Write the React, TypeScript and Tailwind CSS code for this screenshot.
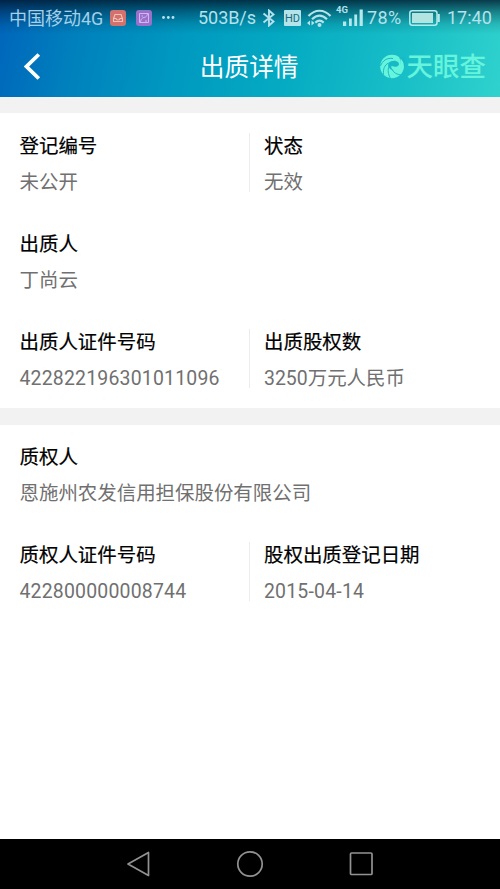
import clsx from "clsx";

interface Field {
  label: string;
  value: string;
}

const pledgor: Field[][] = [
  [
    { label: "登记编号", value: "未公开" },
    { label: "状态", value: "无效" },
  ],
  [{ label: "出质人", value: "丁尚云" }],
  [
    { label: "出质人证件号码", value: "422822196301011096" },
    { label: "出质股权数", value: "3250万元人民币" },
  ],
];

const pledgee: Field[][] = [
  [{ label: "质权人", value: "恩施州农发信用担保股份有限公司" }],
  [
    { label: "质权人证件号码", value: "422800000008744" },
    { label: "股权出质登记日期", value: "2015-04-14" },
  ],
];

const StatusBar = () => (
  <div className="flex h-9 items-center whitespace-nowrap pl-[9px] text-[18px] leading-9 text-[#b4e2ec]">
    <span className="w-[101px] pt-px text-[#a3cfe8]">中国移动4G</span>

    {/* Notification icons */}
    <svg className="h-4 w-4 shrink-0" viewBox="0 0 16 16" fill="none">
      <rect width="16" height="16" rx="3" fill="#d2716d" />
      <path d="M3.5 8.5 5 4.5h6l1.5 4v3h-9zM3.5 8.5H6c.3 2 3.7 2 4 0h2.5" stroke="#f3c2b6" strokeWidth="1.1" />
    </svg>
    <svg className="ml-[10px] h-4 w-4 shrink-0" viewBox="0 0 16 16" fill="none">
      <rect width="16" height="16" rx="3" fill="#9a70cd" />
      <path
        d="M3.5 3.5h9v9h-9zM4.500 12c.5-3 1.500-4.200 3.500-4.500S11 6 11.500 4M5.500 6H7M10 10v2"
        stroke="#ceb8ec"
        strokeWidth="1"
      />
    </svg>
    <svg className="ml-[9px] h-4 w-[14px] shrink-0" viewBox="0 0 14 16" fill="#b9e2ee">
      <circle cx="2.5" cy="7.500" r="1.4" />
      <circle cx="7.3" cy="7.500" r="1.4" />
      <circle cx="12" cy="7.500" r="1.4" />
    </svg>

    <span className="ml-[23px] w-[64px] tracking-[-0.05px]">503B/s</span>

    {/* Bluetooth */}
    <svg className="h-[18px] w-[14px] shrink-0" viewBox="0 0 14 18" fill="none" stroke="#b4e2ec" strokeWidth="1.9">
      <path d="m1.5 4.5 10 8L7 16.500v-15l4.500 4-10 8" />
    </svg>
    <span className="ml-[8px] flex h-4 w-[17px] shrink-0 items-center justify-center rounded-[1px] bg-[#b4e4ea] text-[11px] leading-none text-[#196b7d]">
      HD
    </span>

    {/* Wi-Fi */}
    <svg className="ml-[5px] h-[18px] w-[26px] shrink-0" viewBox="0 0 26 18" fill="none" stroke="#b4e4ea" strokeWidth="2.2">
      <path d="M2.5 7c6.500-7 15.500-7 22 0M6 10.300c4.800-4.600 10.200-4.600 15 0M9.300 13.600c2.800-2.500 5.600-2.500 8.400 0" />
      <circle cx="13.500" cy="15.900" r="2" fill="#b4e4ea" stroke="none" />
      <path d="M4 11.500v5L1 14zM5.500 11.500v5l3-2.500z" fill="#b4e4ea" stroke="none" />
    </svg>

    {/* Cell signal */}
    <div className="relative ml-[11px] h-[18px] w-5 shrink-0">
      <span className="absolute -left-[7px] -top-[4px] text-[9.5px] font-bold leading-none">4G</span>
      <svg className="h-[18px] w-5" viewBox="0 0 20 18" fill="#b4e8ea">
        <path d="M0 12.500h3.200V17H0zM6 9.500h2.800V17H6zM11.300 5.500h2.800V17h-2.800zM16.600.5h3.200V17h-3.200z" />
      </svg>
    </div>
    <span className="ml-[4px] w-[42px] tracking-[0.4px]">78%</span>

    {/* Battery */}
    <svg className="h-4 w-[32px] shrink-0" viewBox="0 0 32 16" fill="none">
      <rect x=".8" y=".8" width="27.2" height="14.4" rx="2.5" stroke="#b4ebea" strokeWidth="1.5" />
      <path d="M3 3h21v10H3z" fill="#b4e4e2" />
      <path d="M28.500 4h2.300v8h-2.300z" fill="#b4ebea" />
    </svg>
    <span className="ml-[6px]">17:40</span>
  </div>
);

const Brand = () => (
  <div className="flex items-center text-[#66f5dc]">
    <svg className="h-[25px] w-[25px]" viewBox="0 0 25 25" fill="none">
      <circle cx="12" cy="12.5" r="11.8" fill="currentColor" />
      {/* Eye opening */}
      <path d="M8.5 9C11 6.500 16 6 18.500 8.500c1 1.500.5 3.500-2 4.300-2.500.2-3.500-1-5-.8-.8 1 .2 3 2 4.500-3.500-.8-6.500-4-5-7.500z" fill="#18b9c6" />
      {/* Notch on the right edge */}
      <path d="M19 3.500c2.500 3 2.500 6.500.5 9.500l5.500.5V3z" fill="#18b9c6" />
      <path d="M20.500 4.500c3 2.800 3.800 6 3.300 10-2.300.3-4.300 0-6-1 2.700-2 3.700-5 2.700-9z" fill="currentColor" />
      {/* Blades */}
      <g stroke="#18b9c6" strokeWidth="1">
        <path d="M.5 12C2.500 6.500 7 3.500 13 4.500M3.500 20.500C3 15 4.500 11 8.500 9M10.500 24.500C8 20 7.500 16 9 12M21 21c-4-.5-7-2-9-5.500" />
      </g>
    </svg>
    <span className="ml-[2px] text-[26.5px] font-medium leading-8">天眼查</span>
  </div>
);

const Header = () => (
  <header className="h-[97px] bg-[linear-gradient(to_bottom,rgba(0,18,38,0.78)_0px,rgba(0,18,38,0.4)_12px,rgba(0,18,38,0.12)_24px,rgba(0,18,38,0)_34px),linear-gradient(102deg,#0064bb_0%,#0082bd_17%,#0099c0_37%,#05abc2_58%,#18bec7_80%,#2fd2cd_100%)]">
    <StatusBar />
    <div className="flex h-[61px] items-center justify-between pl-6 pr-[14px]">
      <svg className="h-7 w-[106px]" viewBox="0 0 106 28" fill="none" stroke="white" strokeWidth="3.8">
        <path d="M14.8 1.5 2.5 13.500l12.300 12" />
      </svg>
      <h1 className="w-[120px] pl-[5px] pt-[2px] text-[24.7px] leading-9 text-white">出质详情</h1>
      <Brand />
    </div>
  </header>
);

const Section = ({ rows, className }: { rows: Field[][]; className?: string }) => (
  <section className={clsx("space-y-[39px] bg-white pb-5", className)}>
    {rows.map((row) => (
      <div key={row[0].label} className="flex h-[59px]">
        {row.map((field, i) => (
          <div
            key={field.label}
            className={
              i > 0
                ? "flex-1 border-l border-[#ececec] pl-[14px]"
                : row.length > 1
                  ? "w-[249px] pl-[19.5px]"
                  : "flex-1 pl-[19.5px]"
            }
          >
            <div className="pt-[2px] text-[19.45px] leading-6 text-black [-webkit-text-stroke:0.2px_black]">
              {field.label}
            </div>
            <div className="mt-3 whitespace-nowrap text-[19.45px] leading-6 text-[#707070]">
              {/^[\d-]+$/.test(field.value) ? (
                <span className="tracking-[0.2px]">{field.value}</span>
              ) : (
                field.value
              )}
            </div>
          </div>
        ))}
      </div>
    ))}
  </section>
);

const NavBar = () => (
  <nav className="flex h-[50px] items-center justify-center gap-[84px] bg-black">
    <svg className="h-7 w-7" viewBox="0 0 28 28" fill="none" stroke="#929292" strokeWidth="1.7" strokeLinejoin="round">
      <path d="M24.5 2.5v23L4 14z" />
    </svg>
    <svg className="h-7 w-7" viewBox="0 0 28 28" fill="none" stroke="#929292" strokeWidth="1.7">
      <circle cx="14" cy="14" r="12.2" />
    </svg>
    <svg className="h-7 w-7" viewBox="0 0 28 28" fill="none" stroke="#929292" strokeWidth="1.7">
      <rect x="2.5" y="3" width="21.5" height="21.5" rx="1" />
    </svg>
  </nav>
);

export default function App() {
  return (
    <div className="flex h-[889px] w-[500px] flex-col overflow-hidden bg-white font-[Roboto,'Noto_Sans_CJK_SC',sans-serif]">
      <Header />
      <main className="flex-1">
        <div className="h-4 bg-[#f2f2f2]" />
        <Section rows={pledgor} className="pt-5" />
        <div className="h-[17px] bg-[#f2f2f2]" />
        <Section rows={pledgee} className="pt-[19px]" />
      </main>
      <NavBar />
    </div>
  );
}
